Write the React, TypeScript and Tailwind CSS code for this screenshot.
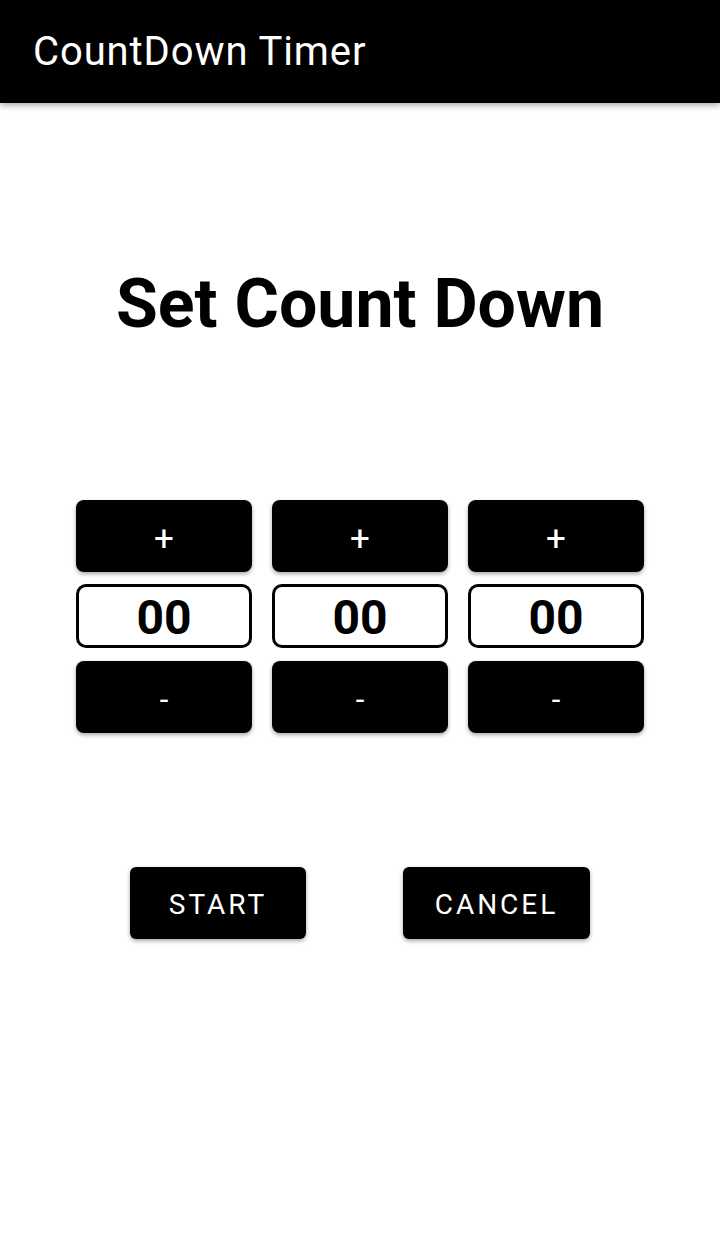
const units = ["hours", "minutes", "seconds"];

const Column = () => (
  <div className="flex flex-col w-[176px]">
    <button className="h-[72px] rounded-lg bg-black text-white text-[35px] leading-none pt-[4px] shadow-[0_2px_4px_rgba(0,0,0,0.35)]">
      +
    </button>
    <div className="mt-[12px] h-[64px] rounded-[10px] border-[3px] border-black flex items-center justify-center text-[48px] font-bold leading-none pt-[4px]">
      00
    </div>
    <button className="mt-[13px] h-[72px] rounded-lg bg-black text-white text-[31px] leading-none pt-[4px] shadow-[0_2px_4px_rgba(0,0,0,0.35)]">
      -
    </button>
  </div>
);

const App = () => {
  return (
    <div className="min-h-[1234px] bg-white font-['Roboto',sans-serif] text-black">
      <header className="h-[103px] bg-black flex items-center px-[33px] shadow-[0_3px_6px_rgba(0,0,0,0.3)] relative">
        <h1 className="text-white text-[40px] leading-none tracking-[0.9px]">CountDown Timer</h1>
      </header>

      <h2 className="mt-[160px] text-center text-[68px] font-bold leading-[82px]">Set Count Down</h2>

      <div className="mt-[155px] flex justify-center gap-[20px]">
        {units.map((u) => (
          <Column key={u} />
        ))}
      </div>

      <div className="mt-[134px] flex justify-center gap-[97px]">
        <button className="w-[176px] h-[72px] rounded-md bg-black text-white text-[28px] tracking-[3px] pt-[4px] shadow-[0_2px_4px_rgba(0,0,0,0.35)]">
          START
        </button>
        <button className="w-[187px] h-[72px] rounded-md bg-black text-white text-[28px] tracking-[3px] pt-[4px] shadow-[0_2px_4px_rgba(0,0,0,0.35)]">
          CANCEL
        </button>
      </div>
    </div>
  );
};

export default App;
